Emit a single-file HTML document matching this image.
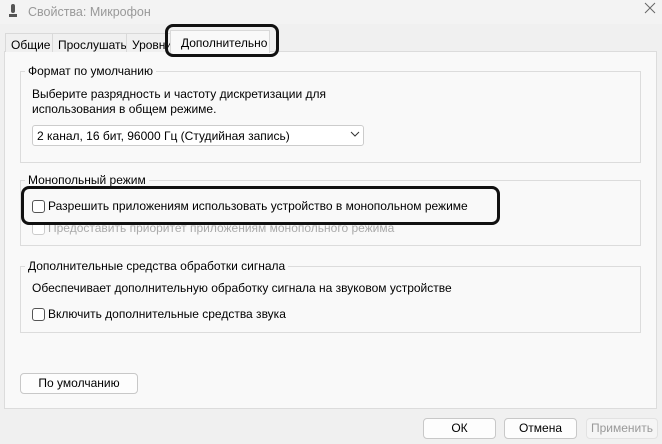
<!DOCTYPE html>
<html><head><meta charset="utf-8"><style>
*{box-sizing:border-box;margin:0;padding:0}
body{width:662px;height:444px;background:#f0f0f0;font-family:"Liberation Sans",sans-serif;font-size:12px;color:#000;position:relative;overflow:hidden}
.a{position:absolute}
.title{left:0;top:0;width:662px;height:24px;background:#f3f3f3}
.panel{left:4px;top:51px;width:653px;height:358px;background:#f9f9f9;border:1px solid #dcdcdc}
.tab{top:33px;height:19px;border:1px solid #d9d9d9;border-bottom:none;background:#f0f0f0;padding:4px 0 0 5px;white-space:nowrap}
.grp{border:1px solid #dcdcdc;left:20px;width:621px}
.lg{background:#f9f9f9;padding:0 3px;white-space:nowrap}
.cb{width:13px;height:13px;border:1px solid #555;border-radius:3px;background:#fff}
.btn{height:21px;border:1px solid #c8c8c8;border-radius:4px;background:#fdfdfd;text-align:center;line-height:19px}
</style></head><body>
<div class="a title"></div>
<svg class="a" style="left:8px;top:4px" width="10" height="15"><rect x="3" y="0" width="4" height="9" rx="2" fill="#555"/><rect x="1" y="10" width="8" height="3" fill="#555"/></svg>
<div class="a" style="left:28px;top:5px;color:#999;font-size:12.5px">Свойства: Микрофон</div>
<svg class="a" style="left:644px;top:2px" width="12" height="12"><path d="M1 1L11 11M11 1L1 11" stroke="#666" stroke-width="1"/></svg>
<div class="a panel"></div>
<div class="a tab" style="left:5px;width:48px">Общие</div>
<div class="a tab" style="left:52px;width:75px">Прослушать</div>
<div class="a tab" style="left:126px;width:45px">Уровни</div>
<div class="a tab" style="left:170px;top:30px;height:23px;width:100px;background:#f9f9f9;padding-top:5px;padding-left:10px">Дополнительно</div>
<div class="a" style="left:165px;top:24px;width:114px;height:33px;border:3px solid #111;border-radius:8px"></div>

<div class="a grp" style="top:71px;height:92px"></div>
<div class="a lg" style="left:25px;top:64px">Формат по умолчанию</div>
<div class="a" style="left:32px;top:87px;line-height:15px">Выберите разрядность и частоту дискретизации для<br>использования в общем режиме.</div>
<div class="a" style="left:32px;top:125px;width:332px;height:21px;border:1px solid #ccc;border-radius:3px;background:#fff;padding:3px 0 0 4px">2 канал, 16 бит, 96000 Гц (Студийная запись)</div>
<svg class="a" style="left:350px;top:131px" width="10" height="6"><path d="M1 1L5 5L9 1" stroke="#333" fill="none"/></svg>

<div class="a grp" style="top:180px;height:66px"></div>
<div class="a lg" style="left:25px;top:173px">Монопольный режим</div>
<div class="a cb" style="left:32px;top:200px"></div>
<div class="a" style="left:48px;top:199px">Разрешить приложениям использовать устройство в монопольном режиме</div>
<div class="a cb" style="left:32px;top:222px;border-color:#ccc"></div>
<div class="a" style="left:48px;top:221px;color:#aaa">Предоставить приоритет приложениям монопольного режима</div>
<div class="a" style="left:21px;top:186px;width:479px;height:39px;border:3px solid #111;border-radius:8px"></div>

<div class="a grp" style="top:266px;height:67px"></div>
<div class="a lg" style="left:25px;top:259px">Дополнительные средства обработки сигнала</div>
<div class="a" style="left:32px;top:281px">Обеспечивает дополнительную обработку сигнала на звуковом устройстве</div>
<div class="a cb" style="left:32px;top:308px"></div>
<div class="a" style="left:48px;top:307px">Включить дополнительные средства звука</div>

<div class="a btn" style="left:20px;top:373px;width:118px">По умолчанию</div>
<div class="a btn" style="left:423px;top:418px;width:73px">ОК</div>
<div class="a btn" style="left:504px;top:418px;width:73px">Отмена</div>
<div class="a btn" style="left:586px;top:418px;width:72px;border-color:#e2e2e2;color:#999;background:#f5f5f5">Применить</div>
</body></html>
